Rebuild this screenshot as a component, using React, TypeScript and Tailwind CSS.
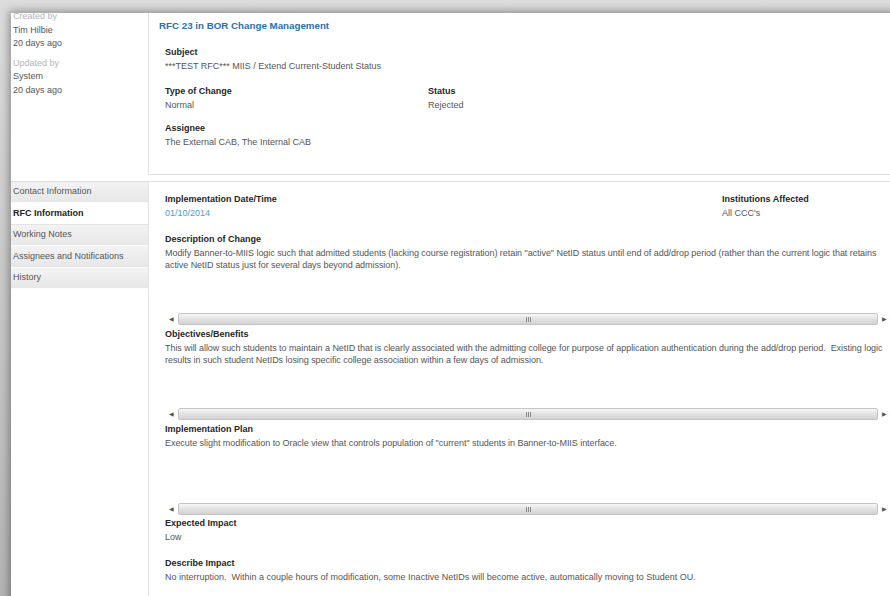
const fontStack = { fontFamily: '"Liberation Sans", Arial, sans-serif' };

function Scrollbar() {
  return (
    <div className="flex h-[12px] items-stretch">
      <div className="flex w-[13px] items-center justify-center text-[6px] text-[#555]">◀</div>
      <div className="relative flex flex-1 items-center justify-center rounded-[2px] border border-[#c4c4c4] bg-gradient-to-b from-[#f6f6f6] via-[#e2e2e2] to-[#d2d2d2]">
        <div className="flex gap-[1px]">
          <span className="h-[5px] w-px bg-[#8a8a8a]" />
          <span className="h-[5px] w-px bg-[#8a8a8a]" />
          <span className="h-[5px] w-px bg-[#8a8a8a]" />
        </div>
      </div>
      <div className="flex w-[13px] items-center justify-center text-[6px] text-[#555]">▶</div>
    </div>
  );
}

function Field({
  label,
  children,
  className = "",
}: {
  label: string;
  children: React.ReactNode;
  className?: string;
}) {
  return (
    <div className={className}>
      <div className="text-[9px] font-bold leading-[14px] text-[#262626]">{label}</div>
      <div className="whitespace-pre text-[9px] leading-[14px] text-[#555]">{children}</div>
    </div>
  );
}

function TextBlock({ label, lines }: { label: string; lines: string[] }) {
  return (
    <div>
      <div className="text-[9px] font-bold leading-[13px] text-[#262626]">{label}</div>
      <div className="h-[67px] pt-[1px] text-[9px] leading-[12px] text-[#555]">
        {lines.map((line) => (
          <div key={line} className="whitespace-pre tracking-[-0.05px]">
            {line}
          </div>
        ))}
      </div>
      <Scrollbar />
    </div>
  );
}

const navItems = [
  "Contact Information",
  "RFC Information",
  "Working Notes",
  "Assignees and Notifications",
  "History",
];

export default function App() {
  return (
    <div
      className="h-[596px] w-[890px] overflow-hidden bg-gradient-to-b from-[#dcdcdc] to-[#b4b4b4] pl-[11px] pt-[13px]"
      style={fontStack}
    >
      <div className="flex h-[620px] w-[890px] bg-white shadow-[-2px_-2px_8px_rgba(0,0,0,0.35)]">
        {/* left column: audit info + section nav */}
        <aside className="flex w-[137px] shrink-0 flex-col">
          <div className="h-[168px] pl-[2px] text-[9px] leading-[13.5px] text-[#555]">
            <div className="-mt-[3px] text-[#b5b5b5]">Created by</div>
            <div>Tim Hilbie</div>
            <div>20 days ago</div>
            <div className="mt-[6px] text-[#b5b5b5]">Updated by</div>
            <div>System</div>
            <div>20 days ago</div>
          </div>
          <nav className="border-t border-[#dedede]">
            {navItems.map((item) => {
              const active = item === "RFC Information";
              return (
                <div
                  key={item}
                  className={
                    active
                      ? "flex h-[21.4px] items-center border-b border-[#e4e4e4] bg-white pl-[2px] text-[9px] font-bold text-[#222]"
                      : "flex h-[21.4px] items-center border-b border-[#fbfbfb] bg-gradient-to-b from-[#f3f3f3] to-[#e7e7e7] pl-[2px] text-[9px] text-[#555]"
                  }
                >
                  {item}
                </div>
              );
            })}
          </nav>
        </aside>

        {/* right column */}
        <main className="flex flex-1 flex-col">
          <section className="h-[162px] border-b border-l border-[#e2e2e2] pl-[10px] pt-[6px]">
            <h1 className="text-[9.75px] font-bold leading-[14px] text-[#2a70aa]">
              RFC 23 in BOR Change Management
            </h1>
            <div className="mt-[12px] pl-[6px]">
              <Field label="Subject">***TEST RFC*** MIIS / Extend Current-Student Status</Field>
              <div className="mt-[11px] grid grid-cols-[263px_1fr]">
                <Field label="Type of Change">Normal</Field>
                <Field label="Status">Rejected</Field>
              </div>
              <Field label="Assignee" className="mt-[9px]">
                The External CAB, The Internal CAB
              </Field>
            </div>
          </section>

          <section className="mt-[6px] flex-1 border-l border-t border-[#e2e2e2] pl-[16px] pr-[10px] pt-[10px]">
            <div className="grid grid-cols-[557px_1fr]">
              <div>
                <div className="text-[9px] font-bold leading-[14px] text-[#262626]">
                  Implementation Date/Time
                </div>
                <div className="text-[9px] leading-[14px] text-[#4a9ad6]">01/10/2014</div>
              </div>
              <Field label="Institutions Affected">All CCC's</Field>
            </div>
            <div className="mt-[13px] flex flex-col gap-[3px]">
              <TextBlock
                label="Description of Change"
                lines={[
                  'Modify Banner-to-MIIS logic such that admitted students (lacking course registration) retain "active" NetID status until end of add/drop period (rather than the current logic that retains',
                  "active NetID status just for several days beyond admission).",
                ]}
              />
              <TextBlock
                label="Objectives/Benefits"
                lines={[
                  "This will allow such students to maintain a NetID that is clearly associated with the admitting college for purpose of application authentication during the add/drop period.  Existing logic",
                  "results in such student NetIDs losing specific college association within a few days of admission.",
                ]}
              />
              <TextBlock
                label="Implementation Plan"
                lines={[
                  'Execute slight modification to Oracle view that controls population of "current" students in Banner-to-MIIS interface.',
                ]}
              />
            </div>
            <Field label="Expected Impact" className="mt-[1px]">
              Low
            </Field>
            <Field label="Describe Impact" className="mt-[12px]">
              No interruption.  Within a couple hours of modification, some Inactive NetIDs will become active, automatically moving to Student OU.
            </Field>
          </section>
        </main>
      </div>
    </div>
  );
}
